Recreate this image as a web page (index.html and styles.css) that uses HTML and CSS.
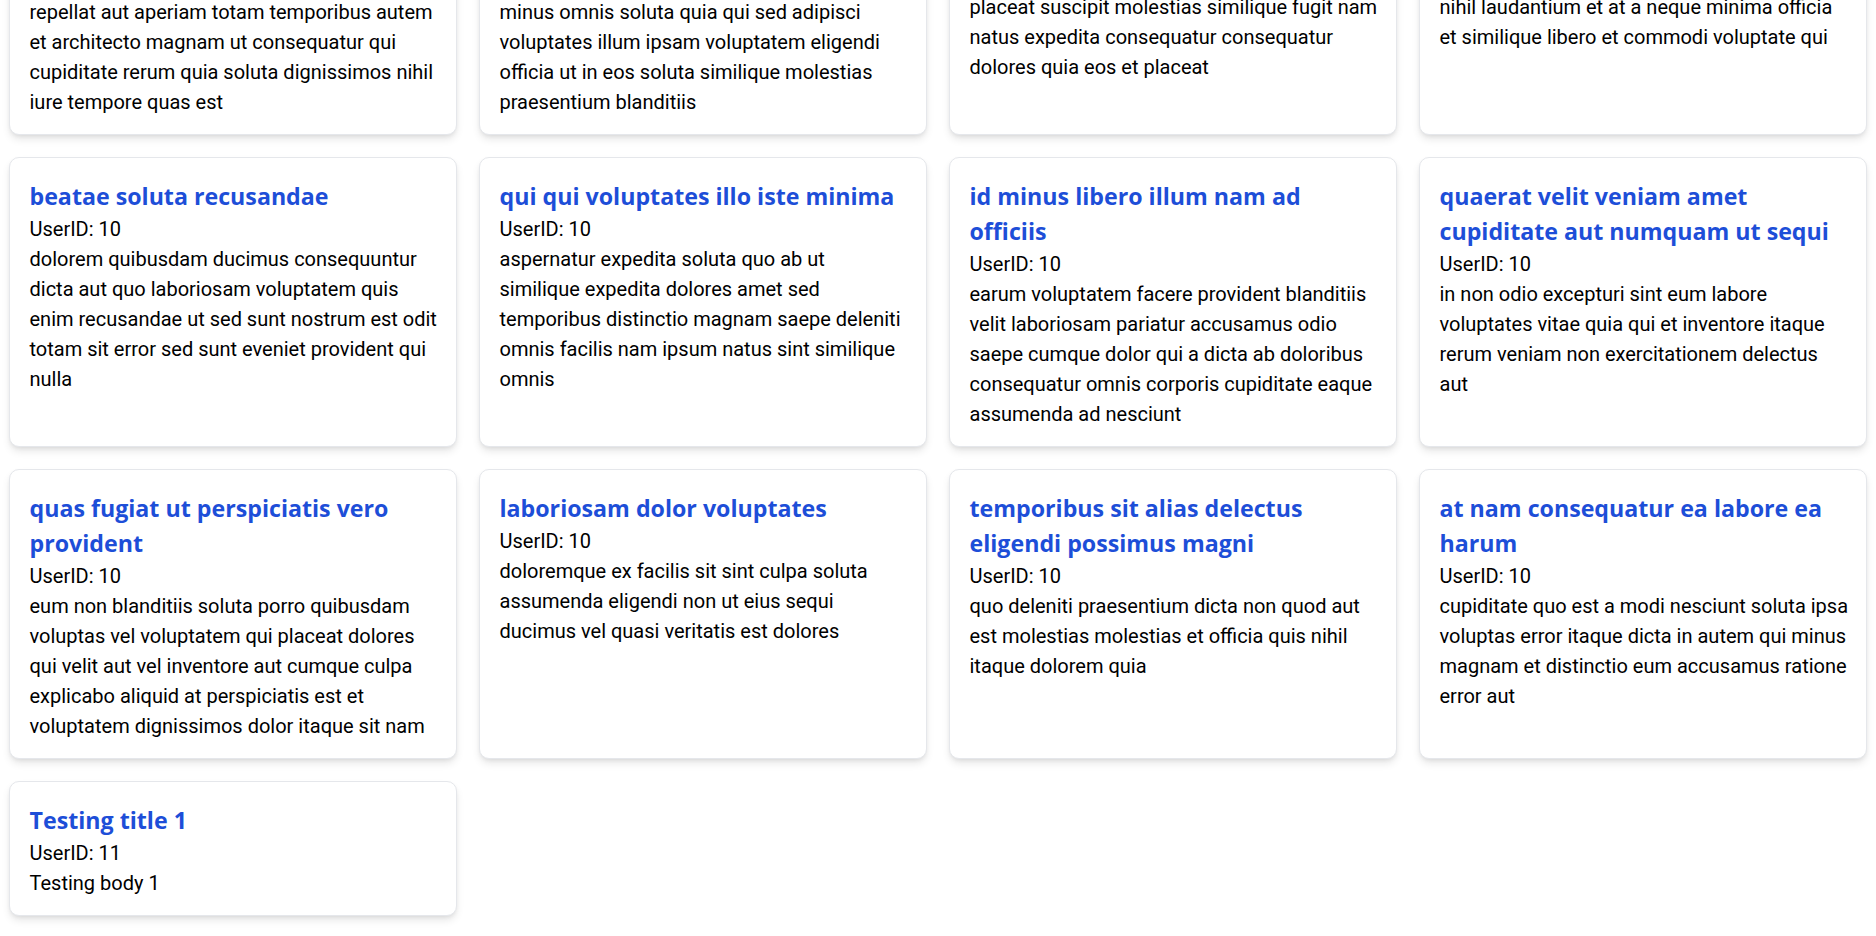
FILE: index.html
```html
<!DOCTYPE html>
<html lang="en">
<head>
<meta charset="utf-8">
<title>Posts</title>
<link rel="stylesheet" href="styles.css">
</head>
<body>
<main class="viewport">
  <div class="posts">
    <article class="card">
      <h2 class="title">sint soluta et vel magnam aut ut sed qui</h2>
      <p class="user">UserID: 9</p>
      <p class="body">repellat aut aperiam totam temporibus autem et architecto magnam ut consequatur qui cupiditate rerum quia soluta dignissimos nihil iure tempore quas est</p>
    </article>
    <article class="card">
      <h2 class="title">ad iusto omnis odit dolor voluptatibus</h2>
      <p class="user">UserID: 9</p>
      <p class="body">minus omnis soluta quia qui sed adipisci voluptates illum ipsam voluptatem eligendi officia ut in eos soluta similique molestias praesentium blanditiis</p>
    </article>
    <article class="card">
      <h2 class="title">aut amet sed</h2>
      <p class="user">UserID: 10</p>
      <p class="body">libero voluptate eveniet aperiam sed sunt placeat suscipit molestias similique fugit nam natus expedita consequatur consequatur dolores quia eos et placeat</p>
    </article>
    <article class="card">
      <h2 class="title">ratione ex tenetur perferendis</h2>
      <p class="user">UserID: 10</p>
      <p class="body">aut et excepturi dicta laudantium sint rerum nihil laudantium et at a neque minima officia et similique libero et commodi voluptate qui</p>
    </article>

    <article class="card">
      <h2 class="title">beatae soluta recusandae</h2>
      <p class="user">UserID: 10</p>
      <p class="body">dolorem quibusdam ducimus consequuntur dicta aut quo laboriosam voluptatem quis enim recusandae ut sed sunt nostrum est odit totam sit error sed sunt eveniet provident qui nulla</p>
    </article>
    <article class="card">
      <h2 class="title">qui qui voluptates illo iste minima</h2>
      <p class="user">UserID: 10</p>
      <p class="body">aspernatur expedita soluta quo ab ut similique expedita dolores amet sed temporibus distinctio magnam saepe deleniti omnis facilis nam ipsum natus sint similique omnis</p>
    </article>
    <article class="card">
      <h2 class="title">id minus libero illum nam ad officiis</h2>
      <p class="user">UserID: 10</p>
      <p class="body">earum voluptatem facere provident blanditiis velit laboriosam pariatur accusamus odio saepe cumque dolor qui a dicta ab doloribus consequatur omnis corporis cupiditate eaque assumenda ad nesciunt</p>
    </article>
    <article class="card">
      <h2 class="title">quaerat velit veniam amet cupiditate aut numquam ut sequi</h2>
      <p class="user">UserID: 10</p>
      <p class="body">in non odio excepturi sint eum labore voluptates vitae quia qui et inventore itaque rerum veniam non exercitationem delectus aut</p>
    </article>

    <article class="card">
      <h2 class="title">quas fugiat ut perspiciatis vero provident</h2>
      <p class="user">UserID: 10</p>
      <p class="body">eum non blanditiis soluta porro quibusdam voluptas vel voluptatem qui placeat dolores qui velit aut vel inventore aut cumque culpa explicabo aliquid at perspiciatis est et voluptatem dignissimos dolor itaque sit nam</p>
    </article>
    <article class="card">
      <h2 class="title">laboriosam dolor voluptates</h2>
      <p class="user">UserID: 10</p>
      <p class="body">doloremque ex facilis sit sint culpa soluta assumenda eligendi non ut eius sequi ducimus vel quasi veritatis est dolores</p>
    </article>
    <article class="card">
      <h2 class="title">temporibus sit alias delectus eligendi possimus magni</h2>
      <p class="user">UserID: 10</p>
      <p class="body">quo deleniti praesentium dicta non quod aut est molestias molestias et officia quis nihil itaque dolorem quia</p>
    </article>
    <article class="card">
      <h2 class="title">at nam consequatur ea labore ea harum</h2>
      <p class="user">UserID: 10</p>
      <p class="body">cupiditate quo est a modi nesciunt soluta ipsa voluptas error itaque dicta in autem qui minus magnam et distinctio eum accusamus ratione error aut</p>
    </article>

    <article class="card">
      <h2 class="title">Testing title 1</h2>
      <p class="user">UserID: 11</p>
      <p class="body">Testing body 1</p>
    </article>
  </div>
</main>
</body>
</html>
```
FILE: styles.css
```css
* { box-sizing: border-box; }

html, body {
  margin: 0;
  padding: 0;
  background: #ffffff;
}

body {
  font-family: Roboto, "Liberation Sans", sans-serif;
  font-size: 20px;
  line-height: 30px;
  color: #000000;
}

.viewport {
  height: 100vh;
  overflow: hidden;
  display: flex;
  flex-direction: column;
  justify-content: flex-end;
}

.posts {
  flex: none;
  display: grid;
  grid-template-columns: repeat(4, minmax(0, 1fr));
  gap: 22px;
  padding: 0 9px 20px 9px;
}

.card {
  background: #ffffff;
  border: 1px solid #e5e7eb;
  border-radius: 10px;
  padding: 21px 17px 17px 19.5px;
  box-shadow: 0 5px 8px -1px rgba(0, 0, 0, 0.1), 0 2px 5px -2px rgba(0, 0, 0, 0.1);
}

.title {
  margin: 0;
  font-family: "Open Sans", "Noto Sans", sans-serif;
  font-weight: 700;
  font-size: 23.2px;
  line-height: 35px;
  color: #1d4ed8;
}

.user,
.body {
  margin: 0;
  font-size: 20px;
  line-height: 30px;
}
```
